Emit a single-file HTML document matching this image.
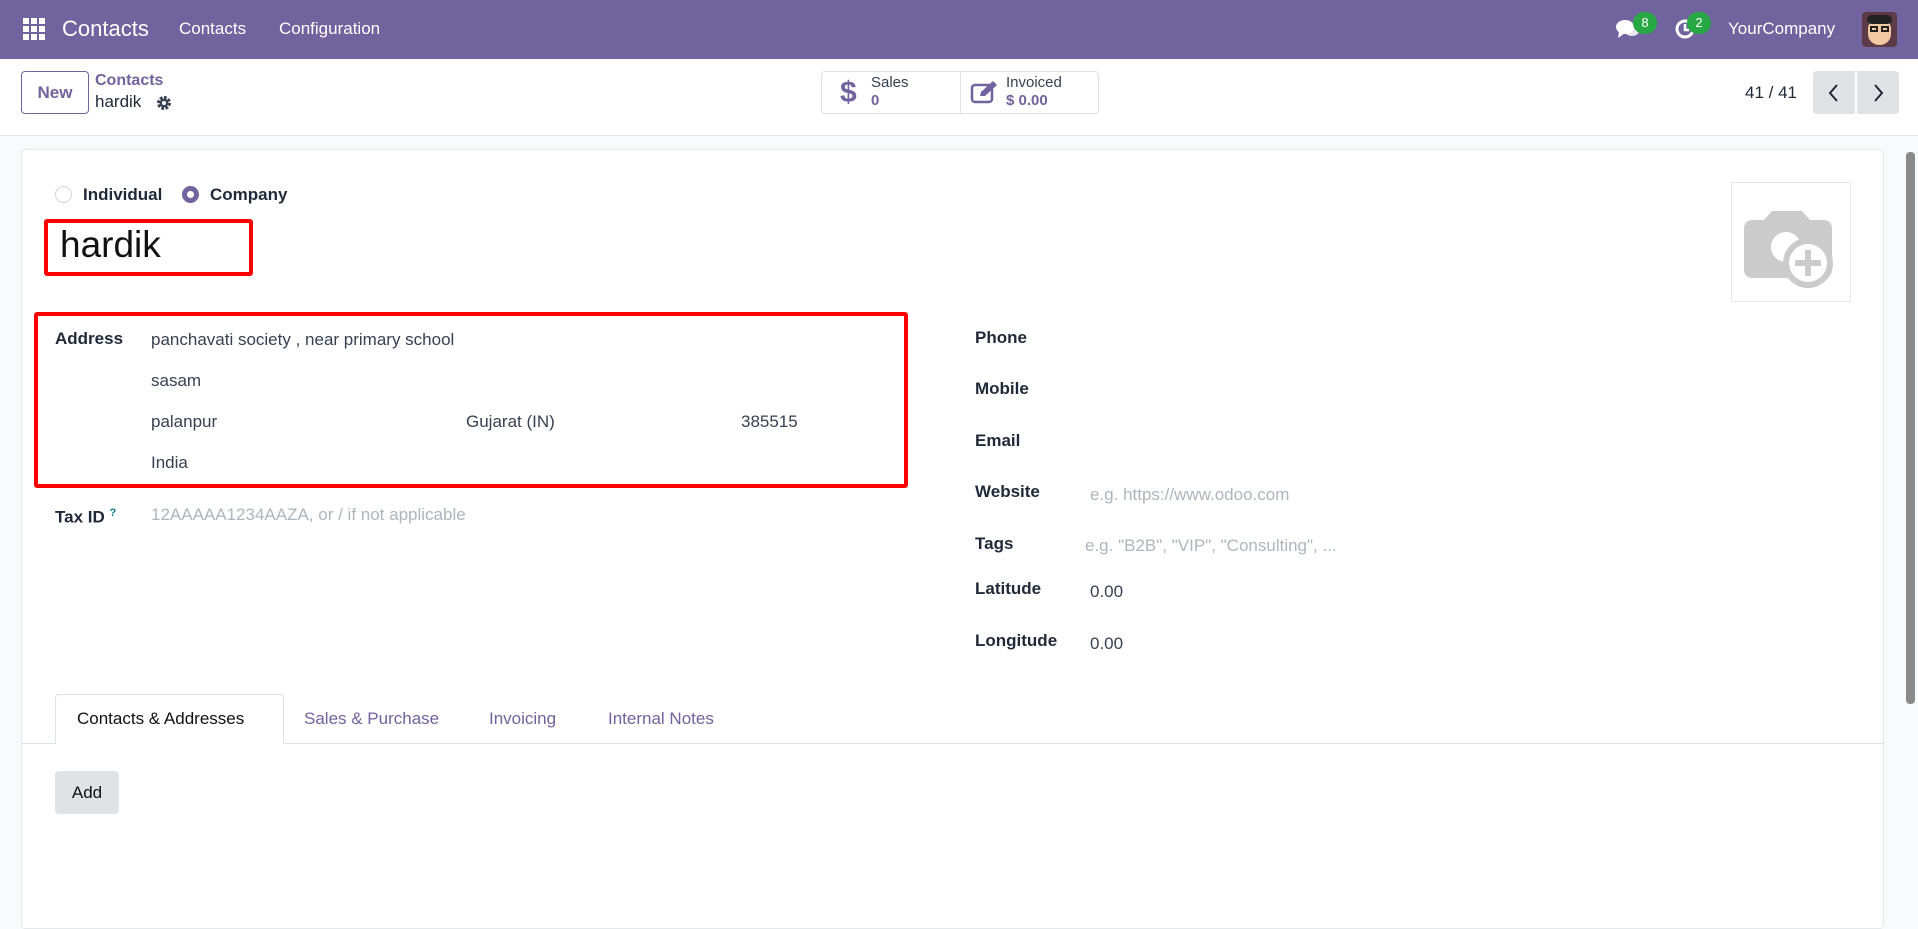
<!DOCTYPE html>
<html><head><meta charset="utf-8">
<style>
*{box-sizing:border-box;margin:0;padding:0}
body{width:1918px;height:917px;overflow:hidden;background:#f9fafb;font-family:"Liberation Sans",sans-serif;font-size:17px;color:#374151;position:relative}
.a{position:absolute;white-space:nowrap;line-height:20px}
.nav{position:absolute;left:0;top:0;width:1918px;height:59px;background:#71639e;color:#fff}
.cp{position:absolute;left:0;top:59px;width:1918px;height:77px;background:#fff;border-bottom:1px solid #e5e7eb}
.card{position:absolute;left:21px;top:149px;width:1863px;height:780px;background:#fff;border:1px solid #e5e7eb;border-radius:4px}
.lbl{font-weight:bold;color:#1f2937}
.ph{color:#adb5bd}
.red{position:absolute;border:4px solid #ff0000;border-radius:3px}
</style></head><body>
<div class="nav">
  <svg class="a" style="left:23px;top:18px" width="22" height="22" viewBox="0 0 22 22" fill="#fff">
    <rect x="0" y="0" width="6" height="6"/><rect x="8" y="0" width="6" height="6"/><rect x="16" y="0" width="6" height="6"/>
    <rect x="0" y="8" width="6" height="6"/><rect x="8" y="8" width="6" height="6"/><rect x="16" y="8" width="6" height="6"/>
    <rect x="0" y="16" width="6" height="6"/><rect x="8" y="16" width="6" height="6"/><rect x="16" y="16" width="6" height="6"/>
  </svg>
  <div class="a" style="left:62px;top:17px;font-size:22px;line-height:24px">Contacts</div>
  <div class="a" style="left:179px;top:19px">Contacts</div>
  <div class="a" style="left:279px;top:19px">Configuration</div>
  <svg class="a" style="left:1616px;top:18px" width="24" height="22" viewBox="0 0 24 22" fill="#fff"><ellipse cx="9" cy="9" rx="9" ry="7"/><path d="M3 14 L2 20 L9 15Z"/><ellipse cx="16" cy="13" rx="7" ry="5" opacity=".85"/></svg>
  <div class="a" style="left:1633px;top:12px;width:24px;height:22px;border-radius:11px;background:#28a745;font-size:13px;text-align:center;line-height:22px">8</div>
  <svg class="a" style="left:1674px;top:18px" width="22" height="22" viewBox="0 0 22 22"><circle cx="11" cy="11" r="8" fill="none" stroke="#fff" stroke-width="3"/><path d="M11 6v6h4" stroke="#fff" stroke-width="2.5" fill="none"/></svg>
  <div class="a" style="left:1687px;top:12px;width:24px;height:22px;border-radius:11px;background:#28a745;font-size:13px;text-align:center;line-height:22px">2</div>
  <div class="a" style="left:1728px;top:19px">YourCompany</div>
  <div class="a" style="left:1862px;top:12px;width:35px;height:35px;border-radius:4px;background:#5c3a48;overflow:hidden">
    <div style="position:absolute;left:6px;top:6px;width:23px;height:27px;border-radius:11px;background:#f2c9a0"></div>
    <div style="position:absolute;left:5px;top:3px;width:25px;height:9px;border-radius:5px;background:#222"></div>
    <div style="position:absolute;left:8px;top:14px;width:8px;height:6px;border:2px solid #222"></div>
    <div style="position:absolute;left:19px;top:14px;width:8px;height:6px;border:2px solid #222"></div>
  </div>
</div>
<div class="cp">
  <div class="a" style="left:21px;top:12px;width:68px;height:43px;border:1px solid #71639e;border-radius:4px;color:#71639e;font-weight:bold;text-align:center;line-height:41px">New</div>
  <div class="a" style="left:95px;top:12px;color:#71639e;font-weight:bold;font-size:16px">Contacts</div>
  <div class="a" style="left:95px;top:33px;color:#1f2937;font-size:17px">hardik</div>
  <svg class="a" style="left:156px;top:36px" width="16" height="16" viewBox="0 0 16 16"><circle cx="8" cy="8" r="5" fill="none" stroke="#374151" stroke-width="4" stroke-dasharray="2.5 1.4"/><circle cx="8" cy="8" r="4.5" fill="#374151"/><circle cx="8" cy="8" r="2" fill="#fff"/></svg>
  <div class="a" style="left:821px;top:12px;width:278px;height:43px;border:1px solid #dee2e6;border-radius:4px"></div>
  <div class="a" style="left:960px;top:12px;width:1px;height:43px;background:#dee2e6"></div>
  <div class="a" style="left:840px;top:17px;font-size:30px;font-weight:bold;color:#71639e;line-height:34px">$</div>
  <div class="a" style="left:871px;top:15px;font-size:15px;line-height:18px">Sales</div>
  <div class="a" style="left:871px;top:33px;font-size:15px;line-height:18px;color:#71639e;font-weight:bold">0</div>
  <svg class="a" style="left:970px;top:22px" width="28" height="24" viewBox="0 0 28 24"><rect x="2" y="4" width="20" height="17" rx="3" fill="none" stroke="#71639e" stroke-width="2.5"/><path d="M10 15 L11 11 L23 0 L27 4 L15 15Z" fill="#71639e"/></svg>
  <div class="a" style="left:1006px;top:15px;font-size:15px;line-height:18px">Invoiced</div>
  <div class="a" style="left:1006px;top:33px;font-size:15px;line-height:18px;color:#71639e;font-weight:bold">$ 0.00</div>
  <div class="a" style="left:1745px;top:24px;color:#1f2937">41 / 41</div>
  <div class="a" style="left:1813px;top:12px;width:42px;height:43px;background:#e0e2e6;border-radius:4px 0 0 4px"></div>
  <div class="a" style="left:1857px;top:12px;width:42px;height:43px;background:#e0e2e6;border-radius:0 4px 4px 0"></div>
  <svg class="a" style="left:1826px;top:24px" width="16" height="20" viewBox="0 0 16 20"><path d="M11 2 L4 10 L11 18" stroke="#1f2937" stroke-width="2" fill="none"/></svg>
  <svg class="a" style="left:1870px;top:24px" width="16" height="20" viewBox="0 0 16 20"><path d="M5 2 L12 10 L5 18" stroke="#1f2937" stroke-width="2" fill="none"/></svg>
</div>
<div class="a" style="left:1906px;top:152px;width:9px;height:552px;background:#8a8a8a;border-radius:4px"></div>
<div class="card">
  <div class="a" style="left:33px;top:36px;width:17px;height:17px;border-radius:50%;border:1px solid #d1d5db"></div>
  <div class="a lbl" style="left:61px;top:35px">Individual</div>
  <div class="a" style="left:160px;top:36px;width:17px;height:17px;border-radius:50%;background:#71639e"><div style="position:absolute;left:5px;top:5px;width:7px;height:7px;border-radius:50%;background:#fff"></div></div>
  <div class="a lbl" style="left:188px;top:35px">Company</div>
  <div class="a" style="left:38px;top:73px;font-size:37px;line-height:44px;color:#111">hardik</div>
  <div class="red" style="left:22px;top:69px;width:209px;height:57px"></div>
  <div class="red" style="left:12px;top:162px;width:874px;height:176px"></div>
  <div class="a lbl" style="left:33px;top:179px">Address</div>
  <div class="a" style="left:129px;top:180px">panchavati society , near primary school</div>
  <div class="a" style="left:129px;top:221px">sasam</div>
  <div class="a" style="left:129px;top:262px">palanpur</div>
  <div class="a" style="left:444px;top:262px">Gujarat (IN)</div>
  <div class="a" style="left:719px;top:262px">385515</div>
  <div class="a" style="left:129px;top:303px">India</div>
  <div class="a lbl" style="left:33px;top:353px">Tax ID <sup style="color:#017e84;font-size:11px">?</sup></div>
  <div class="a ph" style="left:129px;top:355px">12AAAAA1234AAZA, or / if not applicable</div>
  <div class="a lbl" style="left:953px;top:178px">Phone</div>
  <div class="a lbl" style="left:953px;top:229px">Mobile</div>
  <div class="a lbl" style="left:953px;top:281px">Email</div>
  <div class="a lbl" style="left:953px;top:332px">Website</div>
  <div class="a ph" style="left:1068px;top:335px">e.g. https://www.odoo.com</div>
  <div class="a lbl" style="left:953px;top:384px">Tags</div>
  <div class="a ph" style="left:1063px;top:386px">e.g. "B2B", "VIP", "Consulting", ...</div>
  <div class="a lbl" style="left:953px;top:429px">Latitude</div>
  <div class="a" style="left:1068px;top:432px">0.00</div>
  <div class="a lbl" style="left:953px;top:481px">Longitude</div>
  <div class="a" style="left:1068px;top:484px">0.00</div>
  <div class="a" style="left:1709px;top:32px;width:120px;height:120px;border:1px solid #e5e7eb"></div>
  <svg class="a" style="left:1722px;top:55px" width="96" height="86" viewBox="0 0 96 86"><path d="M28 6 h30 l8 9 h14 a8 8 0 0 1 8 8 v42 a8 8 0 0 1 -8 8 H8 a8 8 0 0 1 -8 -8 V23 a8 8 0 0 1 8 -8 h12Z" fill="#cbcbcb"/><circle cx="42" cy="42" r="15" fill="#fff"/><circle cx="64" cy="58" r="25" fill="#cbcbcb"/><circle cx="64" cy="58" r="19" fill="#fff"/><path d="M64 45 v26 M51 58 h26" stroke="#cbcbcb" stroke-width="6"/></svg>
  <div class="a" style="left:0;top:593px;width:1861px;height:1px;background:#dee2e6"></div>
  <div class="a" style="left:33px;top:544px;width:229px;height:50px;background:#fff;border:1px solid #dee2e6;border-bottom:none;border-radius:4px 4px 0 0"></div>
  <div class="a" style="left:55px;top:559px;color:#111">Contacts &amp; Addresses</div>
  <div class="a" style="left:282px;top:559px;color:#71639e">Sales &amp; Purchase</div>
  <div class="a" style="left:467px;top:559px;color:#71639e">Invoicing</div>
  <div class="a" style="left:586px;top:559px;color:#71639e">Internal Notes</div>
  <div class="a" style="left:33px;top:621px;width:64px;height:43px;background:#e0e2e6;border-radius:4px;text-align:center;line-height:43px;color:#111">Add</div>
</div>
</body></html>
